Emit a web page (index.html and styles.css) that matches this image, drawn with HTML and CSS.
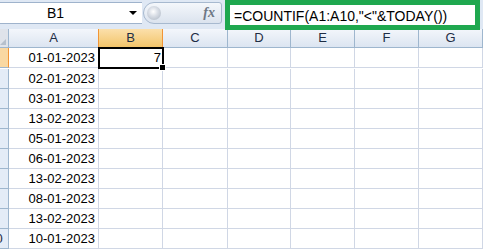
FILE: index.html
```html
<!DOCTYPE html>
<html>
<head>
    <title>COUNTIF dates</title>
    <link rel="stylesheet" href="styles.css">
</head>
<body>
    <div class="window">
        <div class="formula-bar">
            <div class="name-box">
                <span class="name-text">B1</span>
                <span class="name-arrow"></span>
            </div>
            <div class="fx-pill">
                <span class="fx-knob"></span>
                <span class="fx-label">fx</span>
            </div>
            <div class="formula-box">=COUNTIF(A1:A10,"&lt;"&amp;TODAY())</div>
        </div>

        <div class="sheet">
            <div class="corner"></div>
            <div class="col-head">A</div>
            <div class="col-head selected">B</div>
            <div class="col-head">C</div>
            <div class="col-head">D</div>
            <div class="col-head">E</div>
            <div class="col-head">F</div>
            <div class="col-head">G</div>
        </div>
        <div class="sheet" id="rows"></div>
    </div>

    <script>
        const dates = ['01-01-2023', '02-01-2023', '03-01-2023', '13-02-2023', '05-01-2023',
                       '06-01-2023', '13-02-2023', '08-01-2023', '13-02-2023', '10-01-2023'];
        const rows = document.getElementById('rows');

        dates.forEach(function (d, i) {
            const head = document.createElement('div');
            head.className = 'row-head' + (i === 0 ? ' selected' : '');
            head.textContent = i + 1;
            rows.appendChild(head);

            const a = document.createElement('div');
            a.className = 'cell num';
            a.textContent = d;
            rows.appendChild(a);

            const b = document.createElement('div');
            b.className = 'cell num';
            if (i === 0) {
                b.classList.add('active');
                b.innerHTML = '7<span class="handle"></span>';
            }
            rows.appendChild(b);

            for (let c = 0; c < 5; c++) {
                const e = document.createElement('div');
                e.className = 'cell';
                rows.appendChild(e);
            }
        });
    </script>
</body>
</html>
```

FILE: styles.css
```css
body {
    margin: 0;
    overflow: hidden;
    background: #fff;
    font-family: "Liberation Sans", Arial, sans-serif;
    color: #000;
}

.window {
    width: 500px;
    margin-left: -17px;
}

/* formula bar */

.formula-bar {
    display: flex;
    align-items: flex-start;
    height: 29px;
    background: #dfe8f4;
}

.name-box {
    display: flex;
    align-items: center;
    width: 159px;
    height: 20px;
    margin-top: 2px;
    background: #fff;
    border-top: 1px solid #9fb3cc;
    border-bottom: 1px solid #9fb3cc;
    font-size: 14px;
}

.name-text {
    margin-left: 64px;
    flex: 1;
}

.name-arrow {
    width: 0;
    height: 0;
    margin-right: 5px;
    border-left: 4px solid transparent;
    border-right: 4px solid transparent;
    border-top: 4px solid #000;
}

.fx-pill {
    display: flex;
    align-items: center;
    justify-content: space-between;
    width: 68px;
    height: 20px;
    margin-top: 2px;
    margin-left: 1px;
    padding: 0 6px 0 3px;
    border: 1px solid #a7b9cf;
    border-radius: 11px 3px 3px 11px;
    background: linear-gradient(#f4f7fb, #dbe3ee);
}

.fx-knob {
    width: 14px;
    height: 14px;
    border-radius: 50%;
    background: radial-gradient(circle at 45% 40%, #fff 0, #d9dee6 40%, #a9b3c0 100%);
}

.fx-label {
    font-family: "Liberation Serif", serif;
    font-style: italic;
    font-weight: bold;
    font-size: 14px;
    color: #6d7785;
}

.formula-box {
    box-sizing: border-box;
    width: 255px;
    height: 30px;
    margin-left: 3px;
    padding: 3px 0 0 4px;
    border: 5px solid #1fa84f;
    background: #fff;
    font-size: 14px;
    position: relative;
    z-index: 2;
}

/* grid */

.sheet {
    display: grid;
    grid-template-columns: 26px 90px 64px 65px 63px 64px 64px 64px;
}

.corner {
    height: 18px;
    background: #dfe3ea;
    border-right: 1px solid #9eb6ce;
    border-bottom: 1px solid #9eb6ce;
    position: relative;
}

.corner::after {
    content: "";
    position: absolute;
    right: 2px;
    bottom: 2px;
    border-left: 6px solid transparent;
    border-bottom: 6px solid #b6c0cc;
}

.col-head {
    box-sizing: border-box;
    height: 19px;
    line-height: 18px;
    text-align: center;
    font-size: 13px;
    color: #1e2d45;
    background: linear-gradient(#f3f6fb, #dce5f1);
    border-right: 1px solid #9eb6ce;
    border-bottom: 1px solid #9eb6ce;
}

.col-head.selected {
    background: linear-gradient(#fbe0ab, #f2c46a);
    border-color: #f29536;
    border-left: 1px solid #f29536;
    margin-left: -1px;
}

.row-head {
    box-sizing: border-box;
    height: 20px;
    line-height: 19px;
    text-align: center;
    font-size: 13px;
    color: #1e2d45;
    background: #e4ecf7;
    border-right: 1px solid #9eb6ce;
    border-bottom: 1px solid #9eb6ce;
}

.row-head.selected {
    background: #f9d8a2;
    border-right-color: #f29536;
}

.cell {
    box-sizing: border-box;
    height: 20px;
    line-height: 19px;
    padding: 0 3px;
    font-size: 13px;
    border-right: 1px solid #d0d7e5;
    border-bottom: 1px solid #d0d7e5;
}

.num {
    text-align: right;
}

.cell.active {
    position: relative;
    border: 2px solid #000;
    margin: -1px 0 0 -1px;
    height: 22px;
    width: 66px;
    line-height: 18px;
    padding-right: 1px;
}

.handle {
    position: absolute;
    right: -4px;
    bottom: -4px;
    width: 5px;
    height: 5px;
    background: #000;
    border: 1px solid #fff;
}
```
